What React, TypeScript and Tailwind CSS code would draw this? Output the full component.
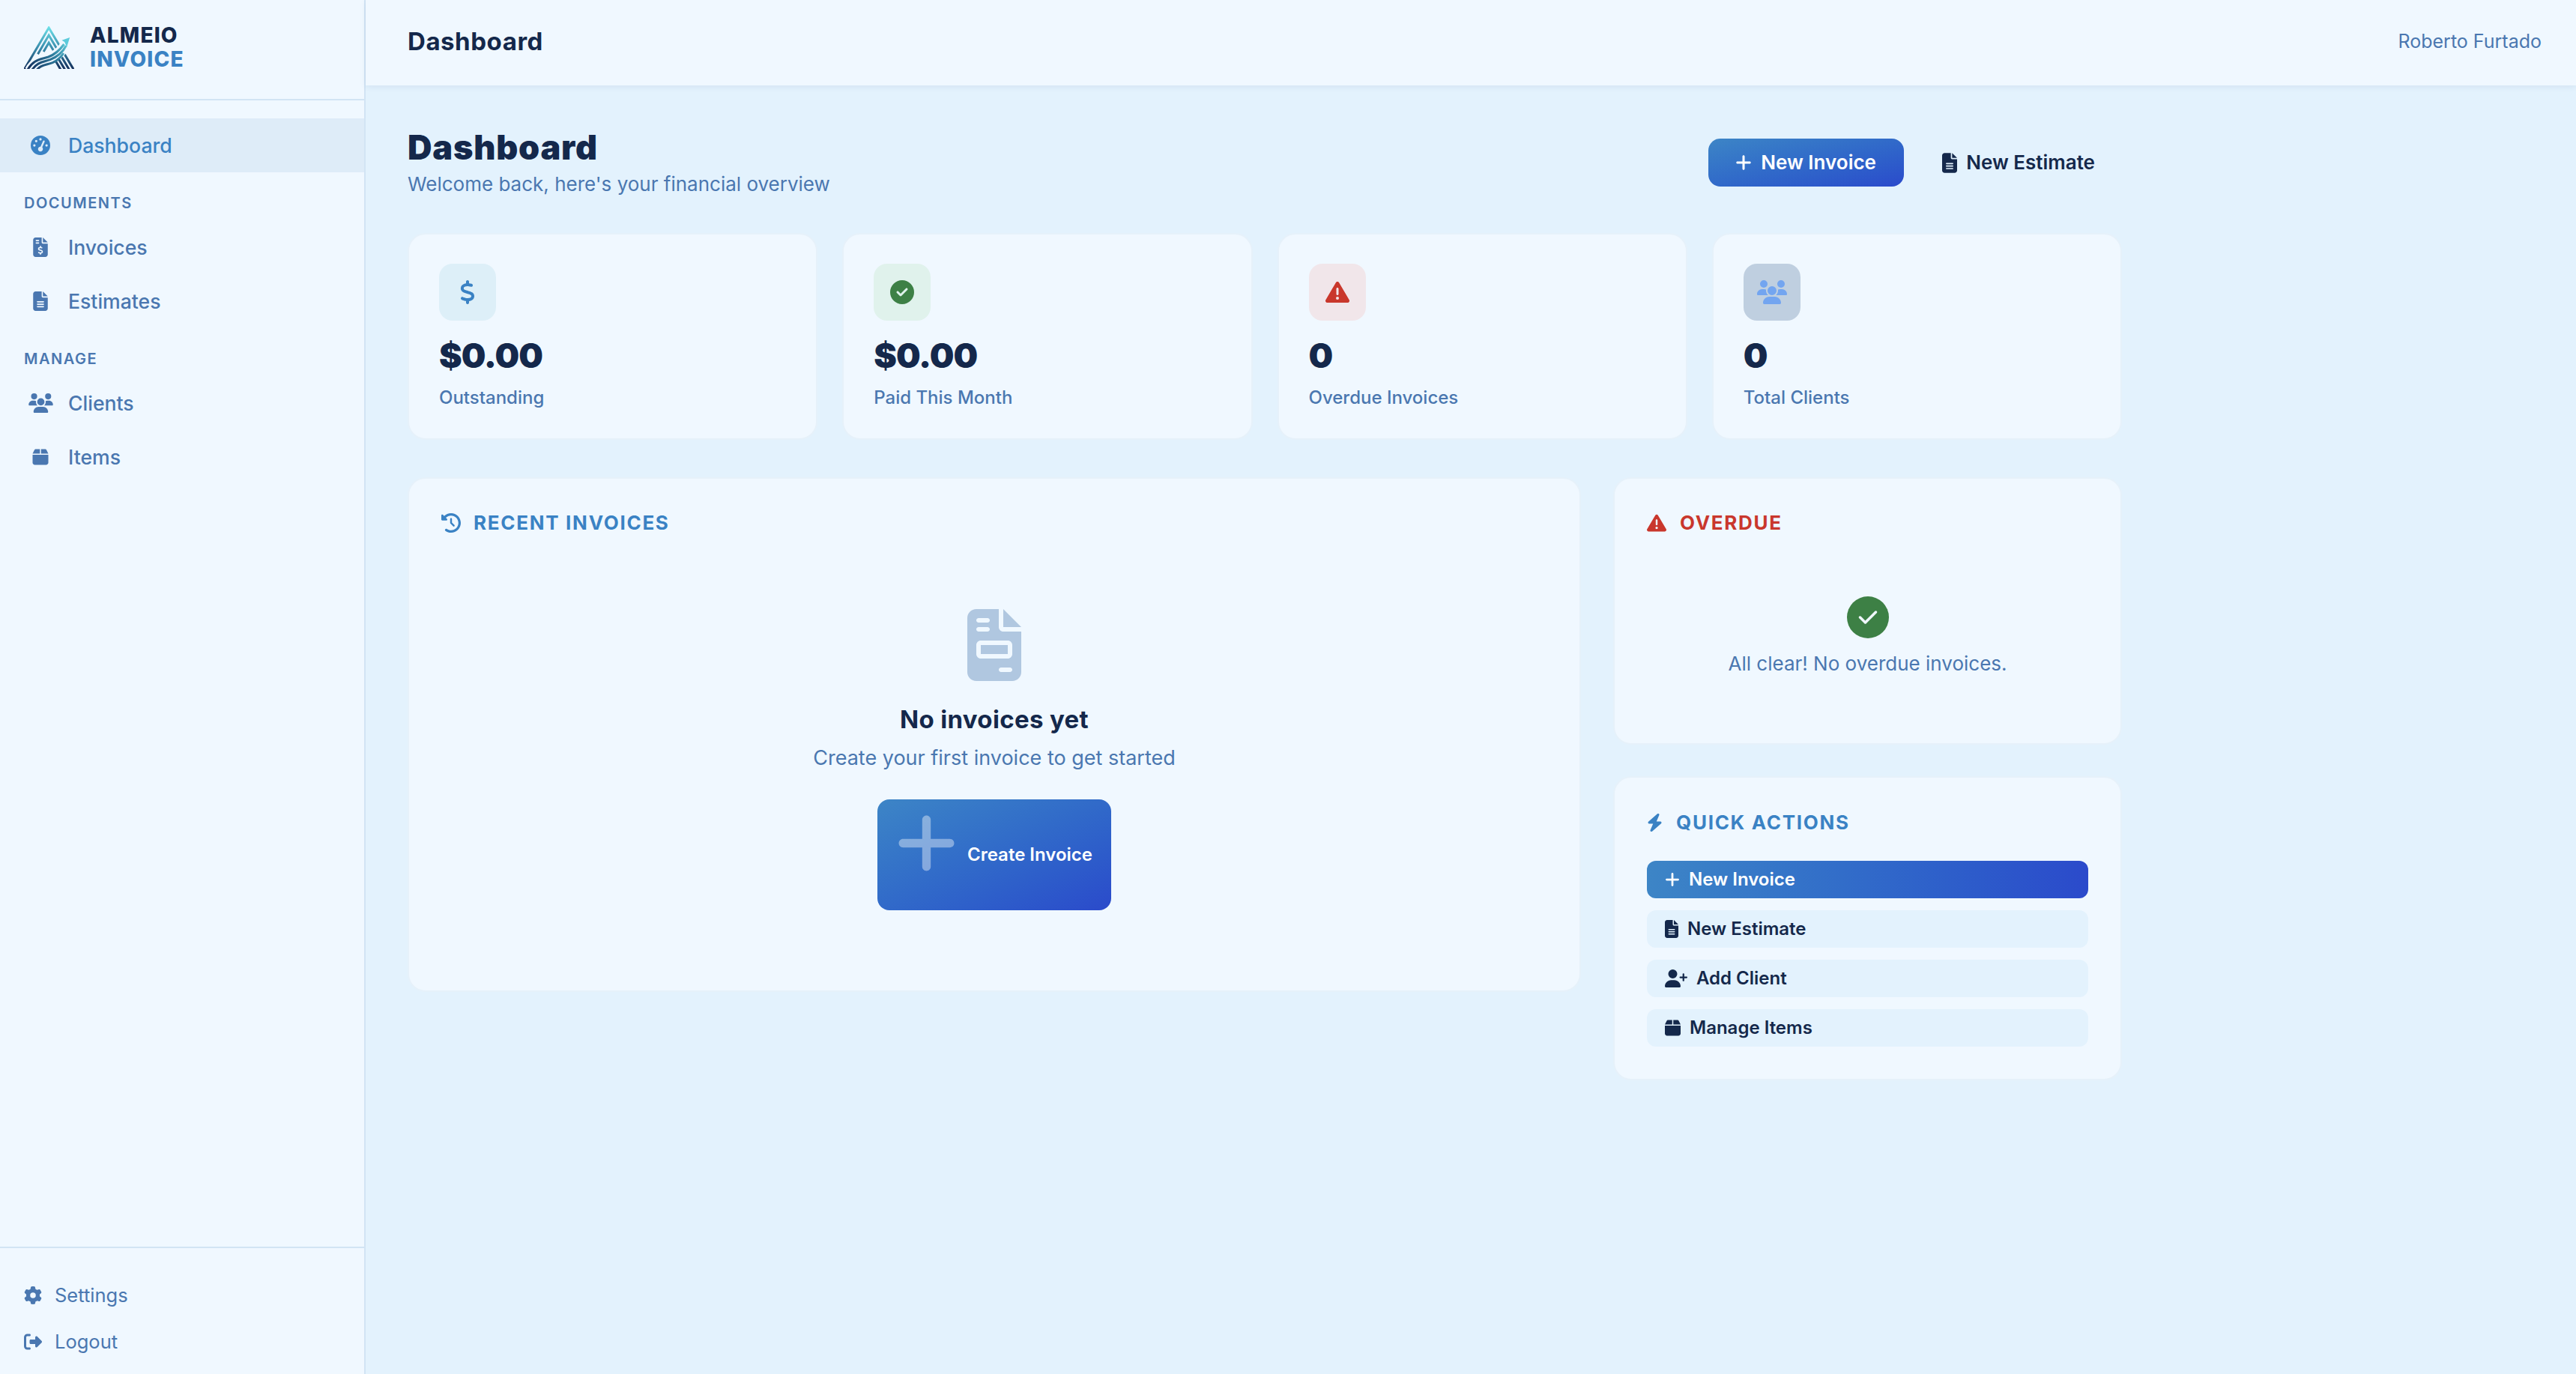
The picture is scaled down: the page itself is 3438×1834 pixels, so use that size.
import React from "react";
import {
  FaGaugeHigh, FaFileInvoiceDollar, FaFileLines, FaUsers, FaBox, FaGear, FaRightFromBracket,
  FaPlus, FaDollarSign, FaCircleCheck, FaTriangleExclamation, FaClockRotateLeft, FaFileInvoice,
  FaCheck, FaBolt, FaUserPlus,
} from "react-icons/fa6";

const inter = "font-['Inter','Liberation_Sans',sans-serif]";

function Logo() {
  return (
    <svg viewBox="68 78 200 171" className="w-[67px] h-[57px] shrink-0" aria-hidden="true">
      <defs>
        <linearGradient id="lg" gradientUnits="userSpaceOnUse" x1="167" y1="78" x2="167" y2="248">
          <stop offset="0" stopColor="#6fe3ea" />
          <stop offset="0.5" stopColor="#3a8fae" />
          <stop offset="1" stopColor="#14305c" />
        </linearGradient>
        <linearGradient id="lg2" gradientUnits="userSpaceOnUse" x1="90" y1="248" x2="250" y2="125">
          <stop offset="0" stopColor="#14305c" />
          <stop offset="0.55" stopColor="#2f7f9f" />
          <stop offset="1" stopColor="#6fe3ea" />
        </linearGradient>
      </defs>
      <g fill="none" stroke="url(#lg)" strokeWidth="9">
        <path d="M66 256 L167 84 L269 256" />
        <path d="M251 256 L167 114 L123 190" />
        <path d="M234 256 L167 144 L146 180" />
        <path d="M217 256 L190 210" />
      </g>
      <g fill="none">
        <path d="M92 256 C112 218 140 218 172 206 C202 194 222 176 238 146" stroke="#f0f8ff" strokeWidth="44" />
        <path d="M80 256 C105 210 132 212 165 201 C195 190 212 172 228 150" stroke="url(#lg2)" strokeWidth="9" />
        <path d="M98 256 C120 220 145 222 172 212 C202 200 222 184 236 156" stroke="url(#lg2)" strokeWidth="9" />
        <path d="M116 256 C135 232 155 234 182 224 C200 216 214 204 226 186" stroke="url(#lg2)" strokeWidth="9" />
      </g>
      <path d="M251 123 L219 134 L230 141 L239 161 Z" fill="#5ccbdb" />
    </svg>
  );
}

function NavItem({ icon, label, active }: { icon: React.ReactNode; label: string; active?: boolean }) {
  return (
    <a className={`flex items-center h-[72px] ${active ? "bg-[#deecf8] text-[#3a82c4]" : "text-[#4a77b0]"}`}>
      <span className="w-[36px] ml-[36px] mr-[19px] flex justify-center shrink-0">{icon}</span>
      <span className={`${inter} text-[26.6px] font-medium leading-[36px]`}>{label}</span>
    </a>
  );
}

function SectionLabel({ children, className }: { children: React.ReactNode; className: string }) {
  return (
    <div className={`${inter} pl-[32px] text-[20px] font-semibold tracking-[1.5px] leading-[28px] text-[#4a77b0] ${className}`}>
      {children}
    </div>
  );
}

function StatCard({ icon, box, value, label }: { icon: React.ReactNode; box: string; value: string; label: string }) {
  return (
    <div className="bg-[#f0f8ff] border-2 border-[#e6f1fa] rounded-[24px] pt-[39px] pl-[40px] pb-[36px] pr-[40px]">
      <div className={`w-[76px] h-[76px] rounded-[18px] flex items-center justify-center ${box}`}>{icon}</div>
      <div className={`${inter} mt-[18px] text-[46px] leading-[56px] font-black tracking-[-1px] text-[#14284b]`}>{value}</div>
      <div className={`${inter} mt-[11px] text-[24px] leading-[36px] font-medium text-[#4a77b0]`}>{label}</div>
    </div>
  );
}

function PanelTitle({ icon, color, children, gap }: { icon: React.ReactNode; color: string; children: React.ReactNode; gap: string }) {
  return (
    <div className={`flex items-center h-[32px] ${gap} ${color}`}>
      {icon}
      <span className={`${inter} text-[26px] leading-[32px] font-bold tracking-[1.7px]`}>{children}</span>
    </div>
  );
}

function QuickBtn({ icon, label, primary, gap }: { icon: React.ReactNode; label: string; primary?: boolean; gap: string }) {
  return (
    <a
      className={`flex items-center h-[50px] pl-[24px] rounded-[12px] ${gap} ${
        primary ? "bg-gradient-to-r from-[#3d85c6] to-[#2b4acb] text-white" : "bg-[#e3f2fd] text-[#14284b]"
      }`}
    >
      {icon}
      <span className={`${inter} text-[24px] font-semibold leading-[32px]`}>{label}</span>
    </a>
  );
}

export default function App() {
  return (
    <div className="flex min-h-[1834px] h-[1834px] bg-[#e3f2fd] overflow-hidden">
      <aside className="w-[488px] shrink-0 bg-[#f0f8ff] border-r-2 border-[#d2e4f4] flex flex-col">
        <div className="h-[134px] border-b-2 border-[#d2e4f4] flex items-center pl-[32px] pb-[6px] gap-[21px] shrink-0">
          <Logo />
          <div className={`${inter} font-extrabold text-[28px] leading-[32px] tracking-[1.2px]`}>
            <div className="text-[#14284b]">ALMEIO</div>
            <div className="text-[#3a82c4]">INVOICE</div>
          </div>
        </div>
        <nav className="pt-[24px] flex-1">
          <NavItem active label="Dashboard" icon={<FaGaugeHigh className="w-[26px] h-[26px]" />} />
          <SectionLabel className="mt-[27px]">DOCUMENTS</SectionLabel>
          <div className="mt-[9px]">
            <NavItem label="Invoices" icon={<FaFileInvoiceDollar className="w-[20px] h-[26px]" />} />
            <NavItem label="Estimates" icon={<FaFileLines className="w-[20px] h-[26px]" />} />
          </div>
          <SectionLabel className="mt-[27px]">MANAGE</SectionLabel>
          <div className="mt-[9px]">
            <NavItem label="Clients" icon={<FaUsers className="w-[33px] h-[26px]" />} />
            <NavItem label="Items" icon={<FaBox className="w-[24px] h-[24px]" />} />
          </div>
        </nav>
        <div className="border-t-2 border-[#d2e4f4] h-[170px] pt-[32px] pl-[32px] shrink-0 text-[#4a77b0]">
          <a className="flex items-center gap-[17px] h-[62px]">
            <FaGear className="w-[24px] h-[24px]" />
            <span className={`${inter} text-[25.5px] leading-[36px]`}>Settings</span>
          </a>
          <a className="flex items-center gap-[17px] h-[62px]">
            <FaRightFromBracket className="w-[24px] h-[24px]" />
            <span className={`${inter} text-[25.5px] leading-[36px]`}>Logout</span>
          </a>
        </div>
      </aside>

      <div className="flex-1 flex flex-col min-w-0">
        <header className="h-[114px] shrink-0 bg-[#f0f8ff] shadow-[0_2px_8px_rgba(20,60,110,0.08)] flex items-center justify-between pl-[56px] pr-[46px] pb-[5px]">
          <h2 className={`${inter} text-[33px] leading-[40px] font-bold tracking-[0.55px] text-[#14284b]`}>Dashboard</h2>
          <span className={`${inter} text-[25px] leading-[36px] text-[#4a77b0]`}>Roberto Furtado</span>
        </header>

        <main className="px-[56px] pt-[56px]">
          <div className="w-[2288px]">
            <div className="flex items-center justify-between h-[94px] mb-[47px]">
              <div>
                <h1 className={`${inter} text-[45px] leading-[56px] font-black tracking-[0.8px] text-[#14284b]`}>Dashboard</h1>
                <p className={`${inter} pt-[2px] text-[26px] leading-[38px] text-[#4a77b0]`}>Welcome back, here's your financial overview</p>
              </div>
              <div className="flex items-center">
                <a className="flex items-center gap-[12px] w-[261px] h-[64px] pl-[36px] rounded-[16px] bg-gradient-to-br from-[#3d85c6] to-[#2b4acb] text-white">
                  <FaPlus className="w-[22px] h-[24px]" />
                  <span className={`${inter} text-[26px] font-semibold leading-[36px]`}>New Invoice</span>
                </a>
                <a className="flex items-center gap-[12px] pl-[51px] pr-[36px] h-[64px] text-[#14284b]">
                  <FaFileLines className="w-[20px] h-[27px]" />
                  <span className={`${inter} text-[26px] font-semibold leading-[36px]`}>New Estimate</span>
                </a>
              </div>
            </div>

            <div className="grid grid-cols-4 gap-[33px] mb-[50px]">
              <StatCard box="bg-[#ddeff8]" value="$0.00" label="Outstanding" icon={<FaDollarSign className="w-[20px] h-[32px] text-[#3a82c4]" />} />
              <StatCard box="bg-[#e0f2ec]" value="$0.00" label="Paid This Month" icon={<FaCircleCheck className="w-[32px] h-[32px] text-[#3d8045]" />} />
              <StatCard box="bg-[#f1e6ea]" value="0" label="Overdue Invoices" icon={<FaTriangleExclamation className="w-[32px] h-[32px] text-[#c9372c]" />} />
              <StatCard box="bg-[#bfcfe0]" value="0" label="Total Clients" icon={<FaUsers className="w-[40px] h-[32px] text-[#73a5f0]" />} />
            </div>

            <div className="grid grid-cols-[1fr_679px] gap-[43px] items-start">
              <section className="bg-[#f0f8ff] border-2 border-[#e6f1fa] rounded-[24px] pt-[43px] pl-[43px] pr-[43px] pb-[107px]">
                <PanelTitle color="text-[#3a82c4]" gap="gap-[17px]" icon={<FaClockRotateLeft className="w-[26px] h-[26px]" />}>RECENT INVOICES</PanelTitle>
                <div className="flex flex-col items-center mt-[99px]">
                  <FaFileInvoice className="w-[72px] h-[96px] text-[#b0c7e0]" />
                  <h3 className={`${inter} mt-[31px] text-[33px] leading-[40px] font-bold tracking-[0.35px] text-[#14284b]`}>No invoices yet</h3>
                  <p className={`${inter} mt-[14px] text-[27px] leading-[36px] text-[#4a77b0]`}>Create your first invoice to get started</p>
                  <a className="mt-[37px] flex items-center w-[312px] h-[148px] pl-[20px] gap-[9px] rounded-[16px] bg-gradient-to-br from-[#3d85c6] to-[#2b4acb] text-white">
                    <FaPlus className="w-[91px] h-[91px] mb-[32px] opacity-40 shrink-0" />
                    <span className={`${inter} text-[24px] font-semibold leading-[32px] whitespace-nowrap`}>Create Invoice</span>
                  </a>
                </div>
              </section>

              <div className="flex flex-col gap-[42px]">
                <section className="bg-[#f0f8ff] border-2 border-[#e6f1fa] rounded-[24px] pt-[43px] pl-[43px] pr-[43px] pb-[88px]">
                  <PanelTitle color="text-[#c9372c]" gap="gap-[18px]" icon={<FaTriangleExclamation className="w-[26px] h-[26px]" />}>OVERDUE</PanelTitle>
                  <div className="flex flex-col items-center mt-[82px]">
                    <div className="w-[56px] h-[56px] rounded-full bg-[#3d8045] flex items-center justify-center">
                      <FaCheck className="w-[28px] h-[28px] text-[#f0f8ff]" />
                    </div>
                    <p className={`${inter} mt-[16px] text-[26px] leading-[36px] text-[#4a77b0]`}>All clear! No overdue invoices.</p>
                  </div>
                </section>

                <section className="bg-[#f0f8ff] border-2 border-[#e6f1fa] rounded-[24px] pt-[44px] pl-[43px] pr-[43px] pb-[43px]">
                  <PanelTitle color="text-[#3a82c4]" gap="gap-[18px]" icon={<FaBolt className="w-[21px] h-[26px]" />}>QUICK ACTIONS</PanelTitle>
                  <div className="flex flex-col gap-[16px] mt-[35px]">
                    <QuickBtn primary label="New Invoice" gap="gap-[12px]" icon={<FaPlus className="w-[20px] h-[22px]" />} />
                    <QuickBtn label="New Estimate" gap="gap-[12px]" icon={<FaFileLines className="w-[18px] h-[24px]" />} />
                    <QuickBtn label="Add Client" gap="gap-[12px]" icon={<FaUserPlus className="w-[30px] h-[24px]" />} />
                    <QuickBtn label="Manage Items" gap="gap-[12px]" icon={<FaBox className="w-[21px] h-[24px]" />} />
                  </div>
                </section>
              </div>
            </div>
          </div>
        </main>
      </div>
    </div>
  );
}
